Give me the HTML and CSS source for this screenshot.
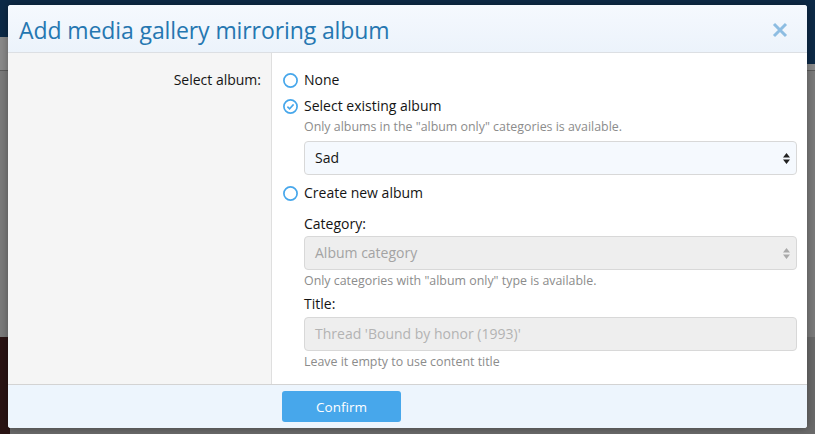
FILE: index.html
```html
<!DOCTYPE html>
<html lang="en">
<head>
  <meta charset="UTF-8">
  <title>Add media gallery mirroring album</title>
  <link rel="stylesheet" href="styles.css">
</head>
<body>
  <div class="page">
    <div class="page-top"></div>
    <div class="page-nav"><div class="nav-right"></div></div>
    <div class="page-main"></div>
    <div class="page-bottom"><div class="page-image"></div></div>
  </div>

  <div class="overlay">
    <div class="dialog">
      <div class="dialog-head">
        <h1 class="dialog-title">Add media gallery mirroring album</h1>
        <span class="dialog-close">
          <svg width="16" height="16" viewBox="0 0 16 16"><path d="M2 2 L14 14 M14 2 L2 14" stroke="#8dbde2" stroke-width="3"/></svg>
        </span>
      </div>

      <div class="dialog-body">
        <div class="row-label">Select album:</div>
        <div class="row-input">
          <div class="choice">
            <svg class="radio" width="15" height="15" viewBox="0 0 15 15"><circle cx="7.5" cy="7.5" r="6.6" fill="#fff" stroke="#47a7eb" stroke-width="1.7"/></svg>
            None
          </div>
          <div class="choice">
            <svg class="radio" width="15" height="15" viewBox="0 0 15 15"><circle cx="7.5" cy="7.5" r="6.6" fill="#fff" stroke="#47a7eb" stroke-width="1.7"/><path d="M4.4 7.6 L6.6 9.8 L10.6 5.4" fill="none" stroke="#47a7eb" stroke-width="1.6"/></svg>
            Select existing album
          </div>
          <div class="sub">
            <div class="hint first">Only albums in the "album only" categories is available.</div>
            <div class="select">Sad
              <svg class="arrows" width="7" height="11" viewBox="0 0 7 11"><path d="M3.5 0 L7 4.5 L0 4.5 Z M0 6.5 L7 6.5 L3.5 11 Z" fill="#222"/></svg>
            </div>
          </div>
          <div class="choice create">
            <svg class="radio" width="15" height="15" viewBox="0 0 15 15"><circle cx="7.5" cy="7.5" r="6.6" fill="#fff" stroke="#47a7eb" stroke-width="1.7"/></svg>
            Create new album
          </div>
          <div class="sub">
            <div class="field-label cat">Category:</div>
            <div class="select disabled">Album category
              <svg class="arrows" width="7" height="11" viewBox="0 0 7 11"><path d="M3.5 0 L7 4.5 L0 4.5 Z M0 6.5 L7 6.5 L3.5 11 Z" fill="#a9a9a9"/></svg>
            </div>
            <div class="hint">Only categories with "album only" type is available.</div>
            <div class="field-label title">Title:</div>
            <div class="text-input">Thread 'Bound by honor (1993)'</div>
            <div class="hint">Leave it empty to use content title</div>
          </div>
        </div>
      </div>

      <div class="dialog-foot">
        <button class="btn">Confirm</button>
      </div>
    </div>
  </div>
</body>
</html>
```

FILE: styles.css
```css
body {
  margin: 0;
  width: 815px;
  height: 434px;
  overflow: hidden;
  position: relative;
  font-family: "Segoe UI", "Open Sans", "Noto Sans", sans-serif;
  background-color: #6b6b6b;
}

.page-top {
  height: 37px;
  background-color: #0d2a47;
}

.page-nav {
  height: 33px;
  background-color: #8a8a8a;
  border-bottom: 1px solid #5c5c5c;
  display: flex;
  justify-content: flex-end;
}

.nav-right {
  width: 10px;
  height: 27px;
  background-color: #0d2a47;
}

.page-main {
  height: 266px;
  background-color: #7b7b7b;
}

.page-bottom {
  height: 98px;
  background-color: #6a6a6a;
}

.page-image {
  width: 10px;
  height: 98px;
  background-color: #2a1414;
}

.overlay {
  position: absolute;
  top: 5px;
  left: 8px;
}

.dialog {
  width: 799px;
  height: 423px;
  background-color: #ffffff;
  border-radius: 3px;
  overflow: hidden;
  display: flex;
  flex-direction: column;
  box-shadow: 0 0 8px rgba(0, 0, 0, 0.35);
}

.dialog-head {
  height: 48px;
  box-sizing: border-box;
  padding: 2px 19px 0 11px;
  display: flex;
  align-items: center;
  justify-content: space-between;
  background: linear-gradient(#f5f9fe, #ecf3fb);
  border-bottom: 1px solid #dcdfe3;
}

.dialog-title {
  margin: 0;
  font-size: 23px;
  font-weight: 400;
  color: #2577b1;
  letter-spacing: -0.1px;
}

.dialog-close {
  display: flex;
}

.dialog-body {
  flex: 1;
  display: flex;
}

.row-label {
  width: 253px;
  flex-shrink: 0;
  background-color: #f5f5f5;
  border-right: 1px solid #dfdfdf;
  padding: 17px 10px 0 0;
  text-align: right;
  font-size: 14px;
  line-height: 20px;
  color: #141414;
}

.row-input {
  flex: 1;
  padding: 17px 10px 0 11px;
}

.choice {
  display: flex;
  align-items: center;
  gap: 6px;
  font-size: 14px;
  line-height: 20px;
  color: #141414;
  margin-bottom: 6px;
}

.choice.create {
  margin-top: 8px;
  margin-bottom: 0;
}

.sub {
  padding-left: 21px;
}

.hint {
  font-size: 12.4px;
  line-height: 16px;
  color: #8c8c8c;
  margin-top: 3px;
}

.hint.first {
  margin-top: -3px;
}

.field-label {
  font-size: 14px;
  line-height: 20px;
  color: #141414;
}

.field-label.cat {
  margin-top: 11px;
}

.field-label.title {
  margin-top: 5px;
}

.select,
.text-input {
  position: relative;
  height: 34px;
  box-sizing: border-box;
  margin-top: 6px;
  padding: 0 10px;
  border: 1px solid #d8d8d8;
  border-radius: 4px;
  background-color: #f5f9fe;
  font-size: 14px;
  line-height: 32px;
  color: #141414;
}

.select.disabled,
.text-input {
  margin-top: 2px;
  background-color: #eeeeee;
  color: #a3a3a3;
}

.text-input {
  margin-top: 3px;
  color: #b3b3b3;
}

.arrows {
  position: absolute;
  right: 6px;
  top: 11px;
}

.dialog-foot {
  height: 44px;
  box-sizing: border-box;
  border-top: 1px solid #d3d3d3;
  background-color: #edf5fd;
  padding: 6px 0 0 274px;
}

.btn {
  width: 119px;
  height: 31px;
  border: none;
  border-radius: 3px;
  background-color: #47a7eb;
  color: #ffffff;
  font-family: inherit;
  font-size: 13.5px;
}
```
